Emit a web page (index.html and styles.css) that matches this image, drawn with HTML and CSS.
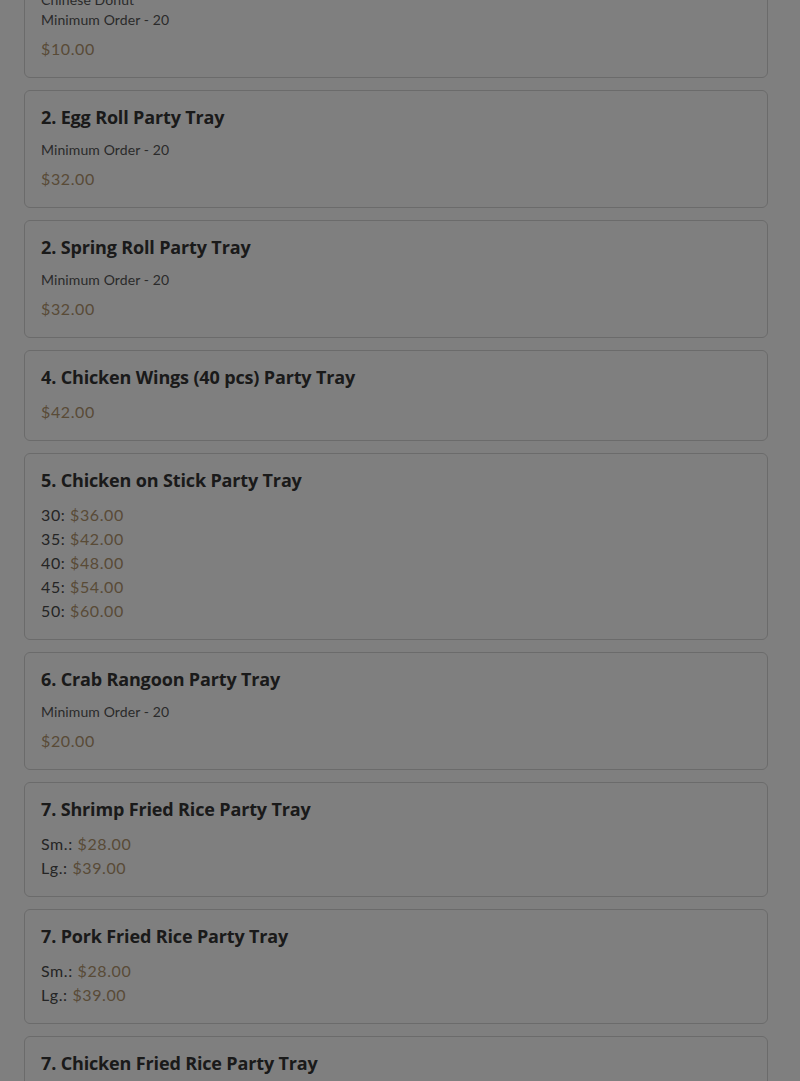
FILE: index.html
```html
<!DOCTYPE html>
<html lang="en">

<head>
    <meta charset="UTF-8">
    <meta name="viewport" content="width=device-width, initial-scale=1.0">
    <title>Party Trays</title>
    <link rel="stylesheet" href="styles.css">
</head>

<body>
    <div class="menu">
        <div class="item">
            <h3>1. Chinese Donut Party Tray</h3>
            <p class="desc">Chinese Donut<br>Minimum Order - 20</p>
            <div class="price">$10.00</div>
        </div>
        <div class="item">
            <h3>2. Egg Roll Party Tray</h3>
            <p class="desc">Minimum Order - 20</p>
            <div class="price">$32.00</div>
        </div>
        <div class="item">
            <h3>2. Spring Roll Party Tray</h3>
            <p class="desc">Minimum Order - 20</p>
            <div class="price">$32.00</div>
        </div>
        <div class="item">
            <h3>4. Chicken Wings (40 pcs) Party Tray</h3>
            <div class="price">$42.00</div>
        </div>
        <div class="item">
            <h3>5. Chicken on Stick Party Tray</h3>
            <div class="size">30: <span>$36.00</span></div>
            <div class="size">35: <span>$42.00</span></div>
            <div class="size">40: <span>$48.00</span></div>
            <div class="size">45: <span>$54.00</span></div>
            <div class="size">50: <span>$60.00</span></div>
        </div>
        <div class="item">
            <h3>6. Crab Rangoon Party Tray</h3>
            <p class="desc">Minimum Order - 20</p>
            <div class="price">$20.00</div>
        </div>
        <div class="item">
            <h3>7. Shrimp Fried Rice Party Tray</h3>
            <div class="size">Sm.: <span>$28.00</span></div>
            <div class="size">Lg.: <span>$39.00</span></div>
        </div>
        <div class="item">
            <h3>7. Pork Fried Rice Party Tray</h3>
            <div class="size">Sm.: <span>$28.00</span></div>
            <div class="size">Lg.: <span>$39.00</span></div>
        </div>
        <div class="item">
            <h3>7. Chicken Fried Rice Party Tray</h3>
            <div class="size">Sm.: <span>$28.00</span></div>
            <div class="size">Lg.: <span>$39.00</span></div>
        </div>
    </div>
    <div class="backdrop"></div>
</body>

</html>
```

FILE: styles.css
```css
* {
    margin: 0;
    padding: 0;
    box-sizing: border-box;
}

body {
    background-color: #fff;
    font-family: Lato, "Noto Sans", sans-serif;
    color: #333;
    overflow: hidden;
}

.menu {
    display: flex;
    flex-direction: column;
    gap: 12px;
    padding: 0 32px 0 24px;
    margin-top: -60px;
}

.item {
    border: 1px solid #d6d6d6;
    border-radius: 6px;
    padding: 16px;
    background-color: #fff;
}

.item h3 {
    font-family: "Open Sans", Lato, sans-serif;
    font-size: 18px;
    line-height: 21px;
    font-weight: 700;
    letter-spacing: -0.15px;
    color: #343434;
    margin-bottom: 12px;
}

.desc {
    font-size: 14px;
    line-height: 20px;
    letter-spacing: 0.1px;
    color: #555;
    margin-bottom: 7px;
}

.price,
.size span {
    color: #b2966f;
}

.price,
.size {
    font-size: 16px;
    line-height: 24px;
    letter-spacing: 0.6px;
}

.size {
    color: #4a4a4a;
}

.backdrop {
    position: fixed;
    inset: 0;
    background-color: rgba(0, 0, 0, 0.5);
}
```
